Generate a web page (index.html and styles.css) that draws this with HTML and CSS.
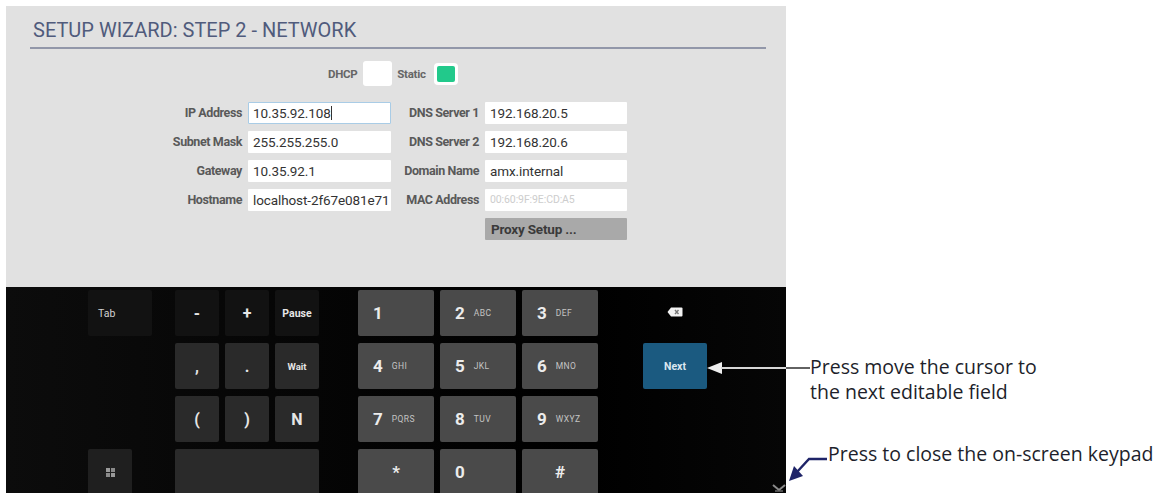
FILE: index.html
```html
<!DOCTYPE html>
<html lang="en">
<head>
<meta charset="utf-8">
<title>Setup Wizard: Step 2 - Network</title>
<link rel="stylesheet" href="styles.css">
</head>
<body>
<div class="page">
  <div class="device">
    <section class="setup">
      <h1 class="title">SETUP WIZARD: STEP 2 - NETWORK</h1>
      <div class="mode">
        <span class="mode-label">DHCP</span>
        <span class="check"></span>
        <span class="mode-label">Static</span>
        <span class="check-on"><span class="dot"></span></span>
      </div>
      <div class="form">
        <div class="label">IP Address</div>
        <div class="field focus">10.35.92.108<span class="caret"></span></div>
        <div class="label">DNS Server 1</div>
        <div class="field">192.168.20.5</div>

        <div class="label">Subnet Mask</div>
        <div class="field">255.255.255.0</div>
        <div class="label">DNS Server 2</div>
        <div class="field">192.168.20.6</div>

        <div class="label">Gateway</div>
        <div class="field">10.35.92.1</div>
        <div class="label">Domain Name</div>
        <div class="field">amx.internal</div>

        <div class="label">Hostname</div>
        <div class="field">localhost-2f67e081e71</div>
        <div class="label">MAC Address</div>
        <div class="field disabled">00:60:9F:9E:CD:A5</div>

        <div class="proxy">Proxy Setup ...</div>
      </div>
    </section>

    <section class="keypad">
      <div class="group g-a">
        <div class="key k-faint k-tab">Tab</div>
        <div class="key k-dark k-sym">
          <svg width="9" height="9" viewBox="0 0 9 9"><rect x="0" y="0" width="4" height="4" fill="#9a9a9a"/><rect x="5" y="0" width="4" height="4" fill="#8a8a8a"/><rect x="0" y="5" width="4" height="4" fill="#8a8a8a"/><rect x="5" y="5" width="4" height="4" fill="#9a9a9a"/></svg>
        </div>
      </div>
      <div class="group g-b">
        <div class="key k-faint k-big">-</div>
        <div class="key k-faint k-big">+</div>
        <div class="key k-faint k-word">Pause</div>
        <div class="key k-mid k-big">,</div>
        <div class="key k-mid k-big">.</div>
        <div class="key k-mid k-small">Wait</div>
        <div class="key k-mid k-big">(</div>
        <div class="key k-mid k-big">)</div>
        <div class="key k-mid k-big">N</div>
        <div class="key k-mid k-space"></div>
      </div>
      <div class="group g-c">
        <div class="key num"><span class="digit">1</span></div>
        <div class="key num"><span class="digit">2</span><span class="letters">ABC</span></div>
        <div class="key num"><span class="digit">3</span><span class="letters">DEF</span></div>
        <div class="key num"><span class="digit">4</span><span class="letters">GHI</span></div>
        <div class="key num"><span class="digit">5</span><span class="letters">JKL</span></div>
        <div class="key num"><span class="digit">6</span><span class="letters">MNO</span></div>
        <div class="key num"><span class="digit">7</span><span class="letters">PQRS</span></div>
        <div class="key num"><span class="digit">8</span><span class="letters">TUV</span></div>
        <div class="key num"><span class="digit">9</span><span class="letters">WXYZ</span></div>
        <div class="key num center"><span class="digit">*</span></div>
        <div class="key num"><span class="digit">0</span></div>
        <div class="key num center"><span class="digit">#</span></div>
      </div>
      <div class="group g-d">
        <div class="key k-back">
          <svg width="16" height="10" viewBox="0 0 16 10"><path d="M4 0.5 H14.5 Q15.5 0.5 15.5 1.5 V8.5 Q15.5 9.5 14.5 9.5 H4 L0.5 5 Z" fill="#f2f2f2"/><path d="M8 3 L11.5 7 M11.5 3 L8 7" stroke="#777" stroke-width="1.4"/></svg>
        </div>
        <div class="key k-next">Next</div>
      </div>
      <svg class="hide-kbd" width="14" height="8" viewBox="0 0 14 8"><path d="M1 1 L7 6 L13 1" fill="none" stroke="#8a8a8a" stroke-width="2"/><path d="M3 7 H11" stroke="#6a6a6a" stroke-width="1.5"/></svg>
    </section>
  </div>

  <svg class="callouts" width="1159" height="493" viewBox="0 0 1159 493">
    <polygon points="707,368 722,362 722,374" fill="#eeeeee"/>
    <line x1="721" y1="368" x2="786" y2="368" stroke="#d6d6d6" stroke-width="2"/>
    <line x1="786" y1="368" x2="810" y2="368" stroke="#3a3a3a" stroke-width="1.6"/>
    <polyline points="827,459 809,459 797,472" fill="none" stroke="#1f2468" stroke-width="2.4"/>
    <polygon points="789,481 803,476 794,466" fill="#1f2468"/>
  </svg>
  <p class="note note-next">Press move the cursor to<br>the next editable field</p>
  <p class="note note-close">Press to close the on-screen keypad</p>
</div>
</body>
</html>
```

FILE: styles.css
```css
* { box-sizing: border-box; }

body {
  margin: 0;
  background: #ffffff;
  font-family: Roboto, "Liberation Sans", sans-serif;
}

.page {
  position: relative;
  width: 1159px;
  height: 493px;
  overflow: hidden;
}

.device {
  margin: 6px 0 0 6px;
  width: 780px;
}

/* ---------- settings panel ---------- */
.setup {
  height: 281px;
  background: #e1e1e1;
  padding-top: 13px;
  overflow: hidden;
}

.title {
  margin: 0 0 0 24px;
  width: 736px;
  padding: 0 0 6px 3px;
  font-family: Roboto, "Liberation Sans", sans-serif;
  font-weight: 400;
  font-size: 20px;
  line-height: 22px;
  color: #505b7c;
  border-bottom: 2px solid #9297a9;
}

.mode {
  display: flex;
  align-items: center;
  height: 25px;
  margin: 12px 0 0 322px;
}

.mode-label {
  font-weight: 700;
  font-size: 11.5px;
  letter-spacing: -0.3px;
  color: #666666;
}

.check {
  width: 29px;
  height: 25px;
  background: #ffffff;
  border-radius: 3px;
  margin: 0 5px 0 6px;
}

.check-on {
  display: flex;
  width: 24px;
  height: 22px;
  padding: 3px;
  margin-left: 8px;
  background: #ffffff;
  border-radius: 4px;
}

.dot {
  flex: 1;
  background: #22c98b;
  border-radius: 2px;
}

.form {
  display: grid;
  grid-template-columns: 80px 143px 82px 142px;
  grid-auto-rows: 22px;
  column-gap: 6px;
  row-gap: 7px;
  margin: 16px 0 0 156px;
}

.label {
  font-weight: 700;
  font-size: 12.5px;
  line-height: 22px;
  color: #595959;
  text-align: right;
  white-space: nowrap;
  letter-spacing: -0.4px;
}

.field {
  background: #ffffff;
  font-size: 13.5px;
  line-height: 22px;
  color: #333333;
  padding-left: 5px;
  white-space: nowrap;
  overflow: hidden;
  border-radius: 1px;
  letter-spacing: -0.1px;
}

.field.focus {
  box-shadow: inset 0 0 0 1px #a9cce6;
}

.caret {
  display: inline-block;
  width: 1px;
  height: 14px;
  background: #333;
  vertical-align: -2px;
}

.field.disabled {
  color: #cdcdcd;
  font-size: 10.5px;
}

.proxy {
  grid-column: 4;
  background: #a9a9a9;
  font-weight: 700;
  font-size: 13.5px;
  line-height: 22px;
  color: #3a3a3a;
  padding-left: 6px;
  border-radius: 1px;
  letter-spacing: -0.2px;
}

/* ---------- keypad ---------- */
.keypad {
  position: relative;
  display: flex;
  align-items: flex-start;
  height: 206px;
  padding: 3px 0 0 82px;
  background: linear-gradient(90deg, #0c0c0c 0%, #040404 45%, #000000 75%, #060606 100%);
  overflow: hidden;
}

.group {
  display: grid;
  grid-template-rows: repeat(4, 46px);
  row-gap: 7px;
  column-gap: 6px;
}

.g-a { grid-template-columns: 64px; margin-right: 23px; }
.g-b { grid-template-columns: repeat(3, 44px); margin-right: 39px; }
.g-c { grid-template-columns: repeat(3, 76px); margin-right: 45px; }
.g-d { grid-template-columns: 64px; }

.key {
  display: flex;
  align-items: center;
  justify-content: center;
  border-radius: 2px;
  color: #e6e6e6;
  font-weight: 700;
}

.k-faint { background: #121212; }
.k-mid { background: #2a2a2a; }
.k-dark { background: #1f1f1f; }

.k-tab {
  justify-content: flex-start;
  padding-left: 10px;
  font-weight: 400;
  font-size: 10.5px;
  color: #d2d2d2;
}

.k-sym {
  grid-row: 4;
  width: 44px;
}

.k-big { font-size: 16px; }
.k-word { font-size: 10.5px; }
.k-small { font-size: 9.5px; }

.k-space { grid-column: 1 / span 3; }

.num {
  justify-content: flex-start;
  padding-left: 15px;
  background: #4a4a4a;
}

.num.center {
  justify-content: center;
  padding-left: 0;
}

.digit {
  font-size: 17px;
  color: #ececec;
}

.letters {
  margin-left: 9px;
  font-size: 8.5px;
  font-weight: 400;
  letter-spacing: 0.4px;
  color: #c4c4c4;
}

.k-back { background: transparent; padding-bottom: 2px; }

.k-next {
  background: #1b5a80;
  font-size: 10.5px;
  color: #dce7f0;
}

.hide-kbd {
  position: absolute;
  left: 766px;
  top: 197px;
}

/* ---------- callouts ---------- */
.callouts {
  position: absolute;
  left: 0;
  top: 0;
  pointer-events: none;
}

.note {
  position: absolute;
  margin: 0;
  font-family: "Open Sans", "DejaVu Sans", sans-serif;
  font-size: 19.5px;
  line-height: 25px;
  color: #1e1f2b;
  white-space: nowrap;
}

.note-next { left: 810px; top: 354px; }
.note-close { left: 828px; top: 441px; }
```
